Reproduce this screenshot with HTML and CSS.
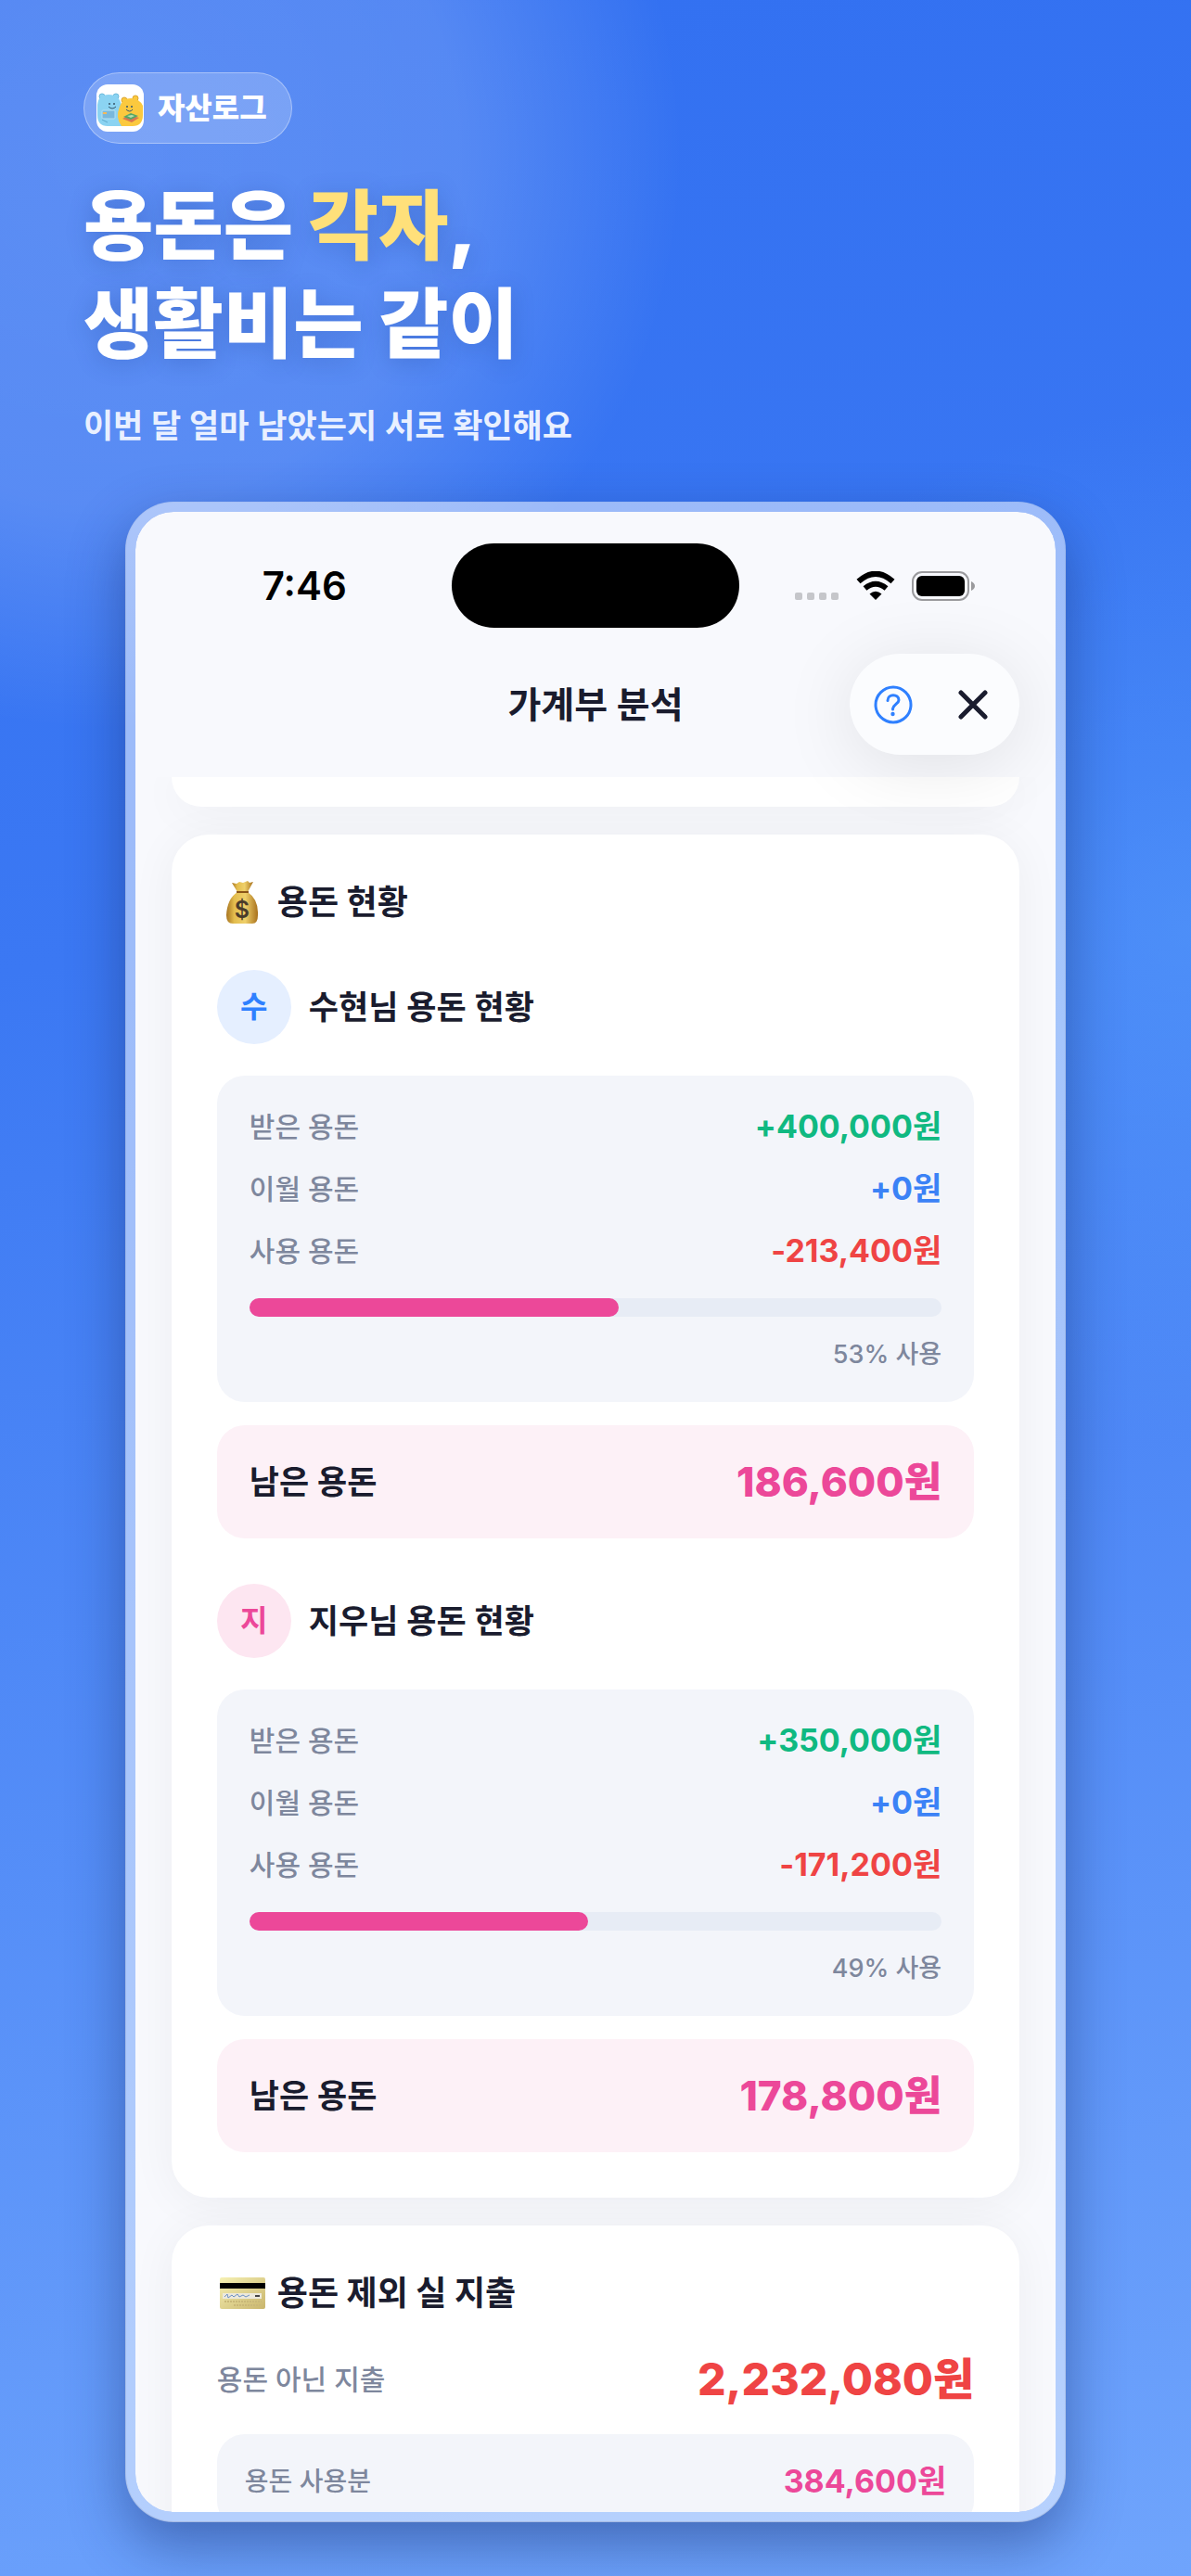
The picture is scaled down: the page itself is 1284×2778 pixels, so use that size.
FILE: index.html
```html
<!DOCTYPE html>
<html lang="ko">
<head>
    <meta charset="UTF-8">
    <meta name="viewport" content="width=device-width, initial-scale=1.0">
    <title>자산로그 - 가계부 분석</title>
    <link rel="stylesheet" href="styles.css">
</head>
<body>

<!-- Hero -->
<header class="hero">
    <div class="brand">
        <svg class="brand-icon" viewBox="0 0 51 51" aria-hidden="true">
            <rect width="51" height="51" rx="12" fill="#fff"/>
            <g fill="#8bd3f2" stroke="#6bb9da" stroke-width="1">
                <circle cx="6" cy="13" r="3"/>
                <circle cx="21" cy="13" r="3"/>
            </g>
            <path d="M1 22Q2 11 13 11Q25 11 27 23L27 45H12Q1 45 1 33Z" fill="#8bd3f2"/>
            <g fill="#fbc93e" stroke="#dca62e" stroke-width="1">
                <circle cx="30" cy="17" r="3"/>
                <circle cx="42" cy="15" r="3"/>
            </g>
            <path d="M27 45Q20 36 25 24Q28 15 37 15Q46 15 50 23V33Q50 45 39 45Z" fill="#fbc93e"/>
            <g fill="#35566a">
                <circle cx="14" cy="21" r="1"/><circle cx="19" cy="21" r="1"/>
                <circle cx="33" cy="24" r="1"/><circle cx="38" cy="24" r="1"/>
            </g>
            <path d="M13 24Q17 28 21 24M32 27Q36 31 39 27" fill="none" stroke="#35566a" stroke-width="1"/>
            <rect x="6" y="28" width="14" height="9" rx="1" fill="#79b8dc" stroke="#b7e0f2" stroke-width="1"/>
            <rect x="7" y="30" width="4" height="2" fill="#f4b95a"/>
            <path d="M6 38L12 41" stroke="#5fa9cc" stroke-width="1"/>
            <path d="M28 37L36 33L46 36L38 41Z" fill="#d9774f"/>
            <path d="M29 35L37 31L45 34L37 38Z" fill="#55a667"/>
            <path d="M33 34L38 33L41 34L37 36Z" fill="#b9dfaa"/>
        </svg>
        <span>자산로그</span>
    </div>
    <h1>용돈은 <em>각자</em>,<br>생활비는 같이</h1>
    <p>이번 달 얼마 남았는지 서로 확인해요</p>
</header>

<!-- Phone -->
<main class="phone">
    <div class="phone-top">
        <div class="status-bar">
            <span class="time">7:46</span>
            <span class="island"></span>
            <div class="status-icons">
                <svg class="signal" viewBox="0 0 48 32" aria-hidden="true">
                    <g fill="#c5c6ca">
                        <rect x="0" y="23" width="8" height="8" rx="2"/>
                        <rect x="13" y="23" width="8" height="8" rx="2"/>
                        <rect x="26" y="23" width="8" height="8" rx="2"/>
                        <rect x="39" y="23" width="8" height="8" rx="2"/>
                    </g>
                </svg>
                <svg class="wifi" viewBox="0 0 42 32" aria-hidden="true">
                    <path d="M2.5 11Q21-5.500 39.500 11" fill="none" stroke="#000" stroke-width="6"/>
                    <path d="M9.500 18.500Q21 9 32.500 18.500" fill="none" stroke="#000" stroke-width="6"/>
                    <path d="M14.500 24.500Q21 19 27.500 24.500L21 31Z"/>
                </svg>
                <svg class="battery" viewBox="0 0 68 32" aria-hidden="true">
                    <rect x="1" y="1" width="60" height="30" rx="10" fill="none" stroke="#9a9a9d" stroke-width="2"/>
                    <rect x="5" y="5" width="52" height="22" rx="6"/>
                    <path d="M64 11Q68 13 68 16Q68 19 64 21Z" fill="#9a9a9d"/>
                </svg>
            </div>
        </div>
        <div class="nav-bar">
            <h2>가계부 분석</h2>
            <div class="nav-actions">
                <button type="button" aria-label="도움말">
                    <svg viewBox="0 0 42 42" fill="none" stroke="#2f80ff" stroke-width="3" stroke-linecap="round">
                        <circle cx="21" cy="21" r="19"/>
                        <path d="M15 16.500C15 8.500 27 9 27 16C27 20 20.500 20.500 20.500 26"/>
                        <circle cx="20.500" cy="31" r="2.200" fill="#2f80ff" stroke="none"/>
                    </svg>
                </button>
                <button type="button" aria-label="닫기">
                    <svg viewBox="0 0 42 42" fill="none" stroke="#1a1c2e" stroke-width="5" stroke-linecap="round">
                        <path d="M8 8L34 34M34 8L8 34"/>
                    </svg>
                </button>
            </div>
        </div>
    </div>

    <div class="content">
        <div class="card card-previous"></div>

        <section class="card">
            <h3>
                <svg class="emoji" viewBox="0 0 54 48" aria-hidden="true">
                    <defs>
                        <linearGradient id="bag" x1="0" x2="1">
                            <stop offset="0" stop-color="#a87420"/>
                            <stop offset=".25" stop-color="#e3bd4e"/>
                            <stop offset=".6" stop-color="#efd06a"/>
                            <stop offset="1" stop-color="#a8701c"/>
                        </linearGradient>
                    </defs>
                    <path d="M16 3L21 4L24 2L28 3L33 1L35 3L39 2L33 13H22Z" fill="url(#bag)"/>
                    <path d="M22 13H33Q45 21 44 38Q44 47 38 47H17Q10 47 10 38Q11 20 22 13Z" fill="url(#bag)"/>
                    <path d="M21 13H34" stroke="#8a5518" stroke-width="2"/>
                    <text x="27" y="41" class="bag-sign">$</text>
                </svg>
                용돈 현황
            </h3>

            <div class="member">
                <div class="member-name"><span class="avatar avatar-blue">수</span><h4>수현님 용돈 현황</h4></div>
                <div class="panel">
                    <dl class="rows">
                        <div><dt>받은 용돈</dt><dd class="green">+400,000원</dd></div>
                        <div><dt>이월 용돈</dt><dd class="blue">+0원</dd></div>
                        <div><dt>사용 용돈</dt><dd class="red">-213,400원</dd></div>
                    </dl>
                    <div class="bar"><div class="bar-fill" style="width: 53.350%"></div></div>
                    <p class="percent">53% 사용</p>
                </div>
                <div class="remain"><span>남은 용돈</span><strong>186,600원</strong></div>
            </div>

            <div class="member">
                <div class="member-name"><span class="avatar avatar-pink">지</span><h4>지우님 용돈 현황</h4></div>
                <div class="panel">
                    <dl class="rows">
                        <div><dt>받은 용돈</dt><dd class="green">+350,000원</dd></div>
                        <div><dt>이월 용돈</dt><dd class="blue">+0원</dd></div>
                        <div><dt>사용 용돈</dt><dd class="red">-171,200원</dd></div>
                    </dl>
                    <div class="bar"><div class="bar-fill" style="width: 48.910%"></div></div>
                    <p class="percent">49% 사용</p>
                </div>
                <div class="remain"><span>남은 용돈</span><strong>178,800원</strong></div>
            </div>
        </section>

        <section class="card">
            <h3>
                <svg class="emoji" viewBox="0 0 54 48" aria-hidden="true">
                    <defs>
                        <linearGradient id="credit" x1="0" y1="0" x2="1" y2="1">
                            <stop offset="0" stop-color="#f6f1b4"/>
                            <stop offset="1" stop-color="#c9b56c"/>
                        </linearGradient>
                    </defs>
                    <rect x="3" y="7" width="49" height="34" rx="2" fill="url(#credit)"/>
                    <rect x="3" y="13" width="49" height="6" fill="#000"/>
                    <rect x="6" y="24" width="42" height="6" fill="#ece9dc"/>
                    <path d="M8 28L11 25L12 29L16 26L18 28L22 25L24 28L28 26L31 28L35 26" fill="none" stroke="#6c8fc4" stroke-width="1"/>
                    <path d="M41 27H46" stroke="#444" stroke-width="2"/>
                    <path d="M8 33H48M18 37H48" stroke="#c9b878" stroke-width="2" stroke-dasharray="2 1"/>
                </svg>
                용돈 제외 실 지출
            </h3>
            <div class="total"><span>용돈 아닌 지출</span><strong>2,232,080원</strong></div>
            <dl class="rows detail">
                <div><dt>용돈 사용분</dt><dd class="pink">384,600원</dd></div>
            </dl>
        </section>
    </div>
</main>

</body>
</html>
```

FILE: styles.css
```css
* {
    box-sizing: border-box;
    margin: 0;
    padding: 0;
}
body {
    display: flex;
    flex-direction: column;
    height: 100vh;
    padding: 78px 0 58px;
    font-family: Inter, "Noto Sans CJK KR", sans-serif;
    color: #1a1c2e;
    background:
        radial-gradient(circle at 9% 6%, rgba(255, 255, 255, 0.2) 0, rgba(255, 255, 255, 0.17) 380px, transparent 620px),
        radial-gradient(circle at 100% 36%, rgba(96, 170, 255, 0.4) 0, transparent 560px),
        linear-gradient(170deg, #3270f1 0%, #3b78f3 35%, #6fa4fc 100%);
}

/* Hero */
.hero {
    padding: 0 7%;
    color: #fff;
}
.brand {
    display: inline-flex;
    align-items: center;
    gap: 15px;
    padding: 12px 26px 12px 13px;
    border: 1px solid rgba(255, 255, 255, 0.35);
    border-radius: 39px;
    background: rgba(255, 255, 255, 0.2);
    font-size: 32px;
    font-weight: 800;
    line-height: 51px;
}
.brand-icon {
    width: 51px;
    height: 51px;
}
.hero h1 {
    margin-top: 36px;
    font-size: 82px;
    font-weight: 900;
    line-height: 106px;
    text-shadow: 0 4px 24px rgba(20, 50, 130, 0.25);
}
.hero em {
    font-style: normal;
    color: #ffe07a;
}
.hero p {
    margin-top: 34px;
    font-size: 35px;
    font-weight: 600;
    line-height: 44px;
    color: #e9f0ff;
}

/* Phone */
.phone {
    display: flex;
    flex-direction: column;
    flex: 1;
    min-height: 0;
    width: 79%;
    margin: 60px auto 0;
    border: 11px solid rgba(255, 255, 255, 0.5);
    border-radius: 52px;
    background: #f8f9fd;
    background-clip: padding-box;
    box-shadow: 0 24px 60px rgba(20, 40, 100, 0.45);
    overflow: hidden;
}
.phone-top {
    position: relative;
    z-index: 1;
    padding: 34px 39px 24px;
}
.status-bar {
    display: grid;
    grid-template-columns: 1fr 310px 1fr;
    align-items: center;
}
.time {
    padding-left: 98px;
    font-size: 42px;
    font-weight: 600;
    color: #000;
}
.island {
    height: 91px;
    border-radius: 46px;
    background: #000;
}
.status-icons {
    display: flex;
    justify-content: flex-end;
    gap: 18px;
    padding-right: 48px;
}
.status-icons svg {
    height: 32px;
}
.nav-bar {
    display: grid;
    grid-template-columns: 1fr auto 1fr;
    align-items: center;
    margin-top: 28px;
}
.nav-bar h2 {
    grid-column: 2;
    font-size: 39px;
    font-weight: 600;
    line-height: 44px;
}
.nav-actions {
    display: flex;
    justify-content: space-between;
    justify-self: end;
    width: 183px;
    padding: 0 7px 0 4px;
    border-radius: 55px;
    background: #fbfcfe;
    box-shadow: 0 10px 80px rgba(0, 0, 0, 0.1);
}
.nav-actions button {
    width: 86px;
    height: 109px;
    border: none;
    background: none;
    cursor: pointer;
}
.nav-actions svg {
    width: 42px;
    height: 42px;
    vertical-align: middle;
}

/* Cards */
.content {
    display: flex;
    flex-direction: column;
    gap: 30px;
    flex: 1;
    min-height: 0;
    padding: 0 39px;
    overflow: hidden;
}
.card {
    flex-shrink: 0;
    padding: 49px;
    border-radius: 40px;
    background: #fff;
    box-shadow: 0 5px 50px rgba(20, 25, 40, 0.05);
}
.card-previous {
    height: 32px;
    padding: 0;
    border-radius: 0 0 40px 40px;
}
.card h3 {
    display: flex;
    align-items: center;
    gap: 11px;
    font-size: 36px;
    font-weight: 700;
    line-height: 48px;
}
.emoji {
    width: 54px;
    height: 48px;
}
.bag-sign {
    font-size: 25px;
    font-weight: 600;
    text-anchor: middle;
    fill: #4a3b2a;
}
.member {
    margin-top: 49px;
}
.member-name {
    display: flex;
    align-items: center;
    gap: 19px;
    margin-bottom: 34px;
}
.member-name h4 {
    font-size: 35px;
    font-weight: 600;
    line-height: 44px;
}
.avatar {
    width: 80px;
    height: 80px;
    border-radius: 50%;
    font-size: 32px;
    font-weight: 600;
    line-height: 80px;
    text-align: center;
}
.avatar-blue {
    background: #e5efff;
    color: #2f80ff;
}
.avatar-pink {
    background: #fde6f1;
    color: #ec4899;
}
.panel {
    padding: 34px 35px;
    border-radius: 30px;
    background: #f3f5fa;
}
.rows {
    display: flex;
    flex-direction: column;
    gap: 25px;
}
.rows div {
    display: flex;
    justify-content: space-between;
    line-height: 42px;
}
.rows dt {
    font-size: 30px;
    font-weight: 500;
    color: #7e879d;
}
.rows dd {
    font-size: 34px;
    font-weight: 700;
}
.green {
    color: #10b981;
}
.blue {
    color: #3b82f6;
}
.red {
    color: #ef4444;
}
.pink {
    color: #ec4899;
}
.bar {
    height: 20px;
    margin-top: 30px;
    border-radius: 10px;
    background: #e7ecf5;
}
.bar-fill {
    height: 100%;
    border-radius: 10px;
    background: #ec4899;
}
.percent {
    margin-top: 24px;
    font-size: 27px;
    font-weight: 500;
    line-height: 34px;
    text-align: right;
    color: #7e879d;
}
.remain {
    display: flex;
    justify-content: space-between;
    margin-top: 25px;
    padding: 34px 35px;
    border-radius: 30px;
    background: #fdf1f7;
    font-size: 35px;
    font-weight: 600;
    line-height: 54px;
}
.remain strong {
    font-size: 44px;
    font-weight: 800;
    color: #ec4899;
}
.total {
    display: flex;
    justify-content: space-between;
    margin: 39px 0 29px;
    font-size: 30px;
    font-weight: 500;
    line-height: 60px;
    color: #7e879d;
}
.total strong {
    font-size: 48px;
    font-weight: 800;
    color: #ef4444;
}
.detail {
    padding: 30px;
    border-radius: 30px;
    background: #f3f5fa;
}
.detail dt {
    font-size: 28px;
}
```
